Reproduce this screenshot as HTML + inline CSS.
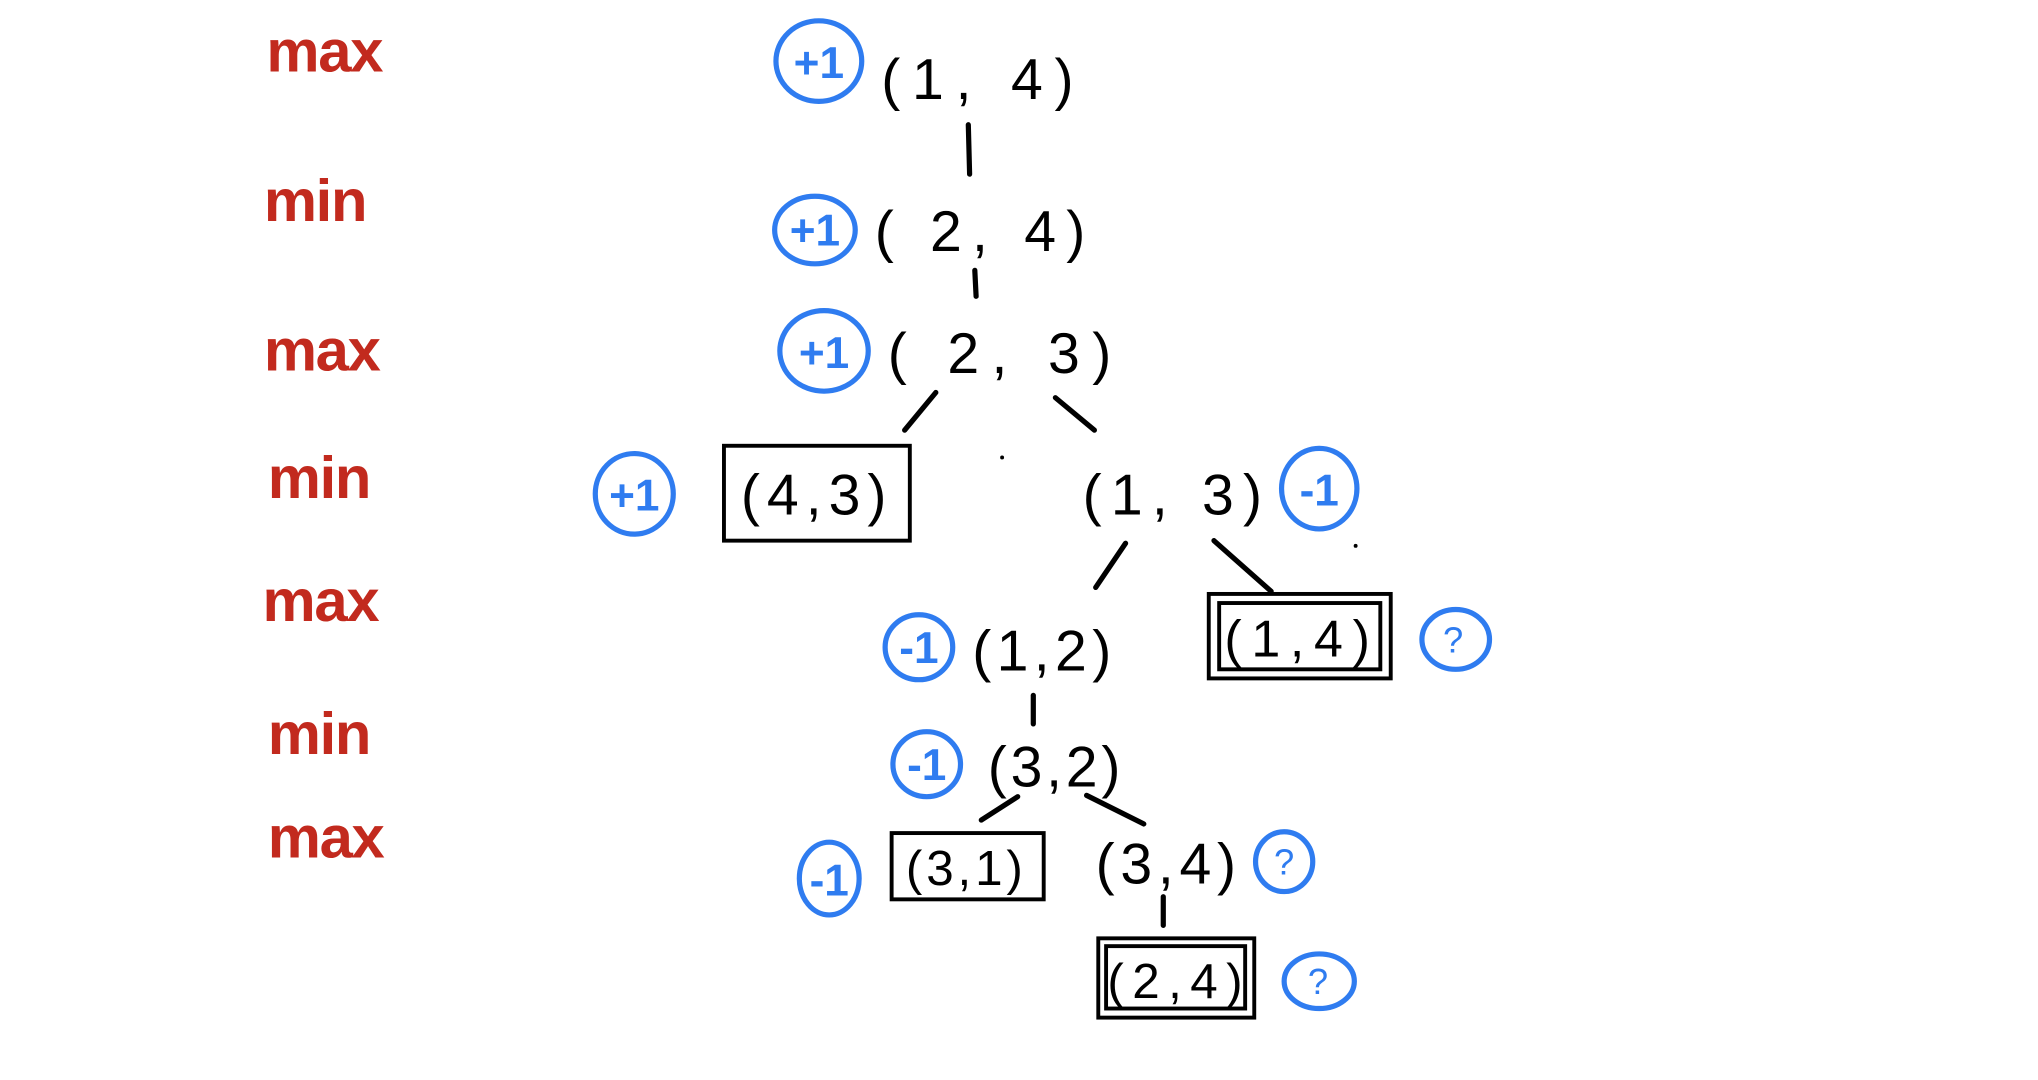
<!DOCTYPE html>
<html><head><meta charset="utf-8"><style>
html,body{margin:0;padding:0;background:#fff;width:2038px;height:1080px;overflow:hidden}
svg{display:block}
.r{font-family:"Liberation Sans",sans-serif;font-weight:bold;font-size:46px;fill:#c22a1e;letter-spacing:-1px}
.k{font-family:"Liberation Sans",sans-serif;font-size:44px;fill:#000}
.b{font-family:"Liberation Sans",sans-serif;font-weight:bold;font-size:34px;fill:#2f7cf0}
.q{font-family:"Liberation Sans",sans-serif;font-size:28px;fill:#2f7cf0}
</style></head><body>
<svg width="2038" height="1080" viewBox="0 0 1568 831" preserveAspectRatio="none" xmlns="http://www.w3.org/2000/svg">
<g class="r">
<text x="205" y="55">max</text>
<text x="203" y="170">min</text>
<text x="203" y="285">max</text>
<text x="206" y="383">min</text>
<text x="202" y="478">max</text>
<text x="206" y="580">min</text>
<text x="206" y="660">max</text>
</g>
<g fill="none" stroke="#2f7cf0" stroke-width="4">
<ellipse cx="630" cy="47" rx="33" ry="31"/>
<ellipse cx="627" cy="177" rx="31" ry="26"/>
<ellipse cx="634" cy="270" rx="34" ry="31"/>
<ellipse cx="488" cy="380" rx="30" ry="31"/>
<ellipse cx="1015" cy="376" rx="29" ry="31"/>
<ellipse cx="707" cy="498" rx="26" ry="25"/>
<ellipse cx="713" cy="588" rx="26" ry="25"/>
<ellipse cx="638" cy="676" rx="23" ry="28"/>
<ellipse cx="1120" cy="492" rx="26" ry="23"/>
<ellipse cx="988" cy="663" rx="22" ry="23"/>
<ellipse cx="1015" cy="755" rx="27" ry="21"/>
</g>
<g class="b" text-anchor="middle">
<text x="630" y="60">+1</text>
<text x="627" y="189">+1</text>
<text x="634" y="283">+1</text>
<text x="488" y="393">+1</text>
<text x="1015" y="389">-1</text>
<text x="707" y="510">-1</text>
<text x="713" y="600">-1</text>
<text x="638" y="689">-1</text>
</g>
<g class="q" text-anchor="middle">
<text x="1118" y="502">?</text>
<text x="988" y="673">?</text>
<text x="1014" y="765">?</text>
</g>
<g class="k">
<text x="678" y="76" textLength="148">(1, 4)</text>
<text x="673" y="193" textLength="162">( 2, 4)</text>
<text x="683" y="287" textLength="172">( 2, 3)</text>
<text x="570" y="396" textLength="112">(4,3)</text>
<text x="833" y="396" textLength="138">(1, 3)</text>
<text x="748" y="516" textLength="107">(1,2)</text>
<text x="760" y="605" textLength="102">(3,2)</text>
<text x="697" y="681" textLength="90" style="font-size:38px">(3,1)</text>
<text x="843" y="680" textLength="108">(3,4)</text>
<text x="942" y="505" textLength="112" style="font-size:40px">(1,4)</text>
<text x="852" y="768" textLength="104" style="font-size:38px">(2,4)</text>
</g>
<g stroke="#000" stroke-width="4" fill="none" stroke-linecap="round">
<line x1="745" y1="96" x2="746" y2="134"/>
<line x1="750" y1="208" x2="751" y2="228"/>
<line x1="720" y1="302" x2="696" y2="331"/>
<line x1="812" y1="306" x2="842" y2="331"/>
<line x1="866" y1="418" x2="843" y2="452"/>
<line x1="934" y1="416" x2="978" y2="455"/>
<line x1="795" y1="535" x2="795" y2="557"/>
<line x1="783" y1="613" x2="755" y2="631"/>
<line x1="836" y1="612" x2="880" y2="634"/>
<line x1="895" y1="690" x2="895" y2="712"/>
</g>
<g stroke="#000" stroke-width="3" fill="none">
<rect x="557" y="343" width="143" height="73"/>
<rect x="686" y="641" width="117" height="51"/>
<rect x="930" y="457" width="140" height="65"/>
<rect x="938" y="464" width="124" height="51"/>
<rect x="845" y="722" width="120" height="61"/>
<rect x="851" y="728" width="107" height="48"/>
</g>
<circle cx="771" cy="352" r="1.5"/>
<circle cx="1043" cy="420" r="1.5"/>
</svg>
</body></html>
